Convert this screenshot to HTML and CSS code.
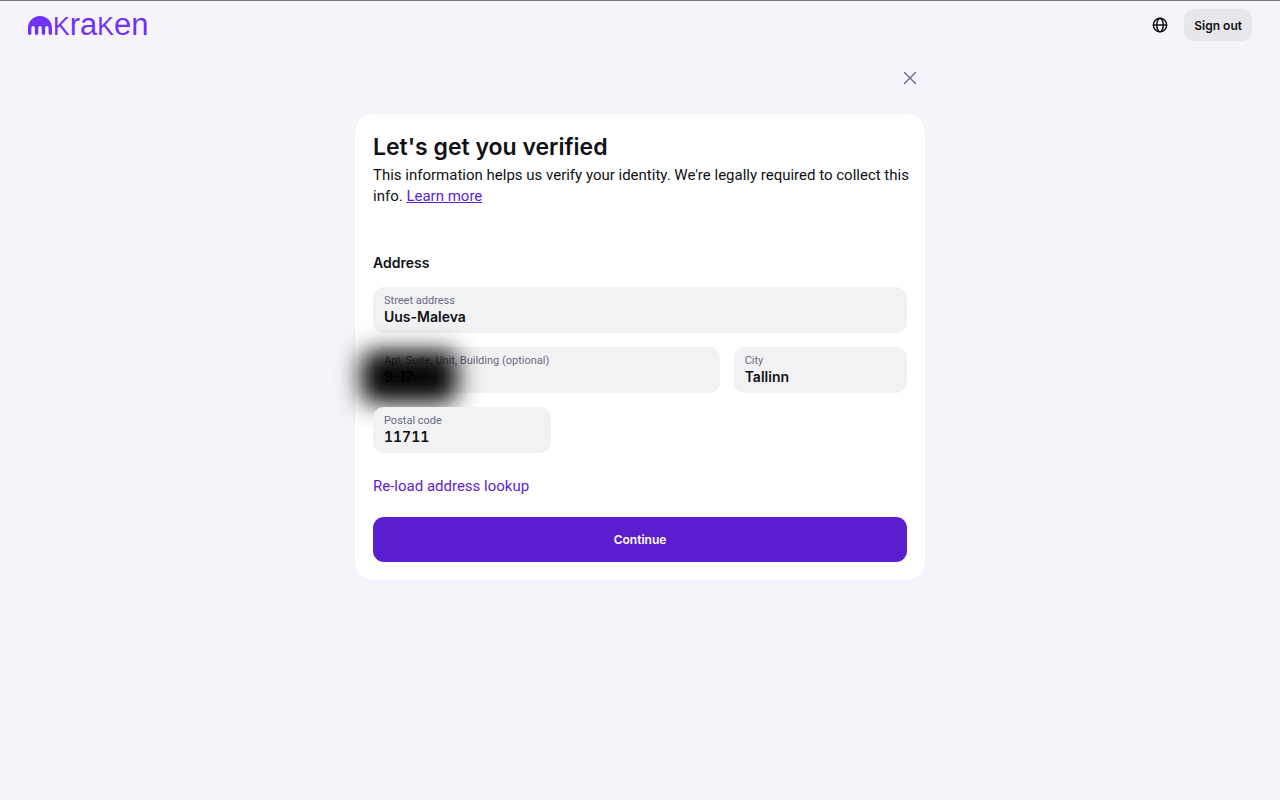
FILE: index.html
```html
<!DOCTYPE html>
<html lang="en">
<head>
    <meta charset="UTF-8">
    <meta name="viewport" content="width=device-width, initial-scale=1.0">
    <title>Kraken - Verification</title>
    <link rel="stylesheet" href="styles.css">
</head>
<body>
    <header class="topbar">
        <a href="#" class="logo" aria-label="kraken">
            <svg class="logo-mark" viewBox="0 0 24 19" aria-hidden="true">
                <path fill="currentColor" d="M12 0C5.300 0 0 5.200 0 11.800V17.200a1.700 1.700 0 0 0 3.400 0V11.800a1.700 1.700 0 0 1 3.500 0V17.200a1.700 1.700 0 0 0 3.400 0V11.800a1.700 1.700 0 0 1 3.400 0V17.200a1.700 1.700 0 0 0 3.400 0V11.800a1.700 1.700 0 0 1 3.500 0V17.200a1.700 1.700 0 0 0 3.400 0V11.800C24 5.200 18.700 0 12 0z"/>
            </svg>
            <span class="logo-text"><span class="logo-k">k</span>ra<span class="logo-k">k</span>en</span>
        </a>
        <div class="topbar-actions">
            <button type="button" class="icon-button" aria-label="Language">
                <svg width="16" height="16" viewBox="0 0 16 16" fill="none" stroke="currentColor" stroke-width="1.500" aria-hidden="true">
                    <circle cx="8" cy="8" r="6.700"/>
                    <ellipse cx="8" cy="8" rx="3.200" ry="6.700"/>
                    <path d="M1.300 8h13.400"/>
                </svg>
            </button>
            <button type="button" class="signout-button">Sign out</button>
        </div>
    </header>

    <main class="container">
        <div class="close-row">
            <button type="button" class="icon-button close-button" aria-label="Close">
                <svg width="14" height="14" viewBox="0 0 14 14" fill="none" stroke="currentColor" stroke-width="1.400" stroke-linecap="round" aria-hidden="true">
                    <path d="M1.500 1.500l11 11M12.500 1.500l-11 11"/>
                </svg>
            </button>
        </div>

        <form class="card">
            <h1>Let's get you verified</h1>
            <p class="intro">This information helps us verify your identity. We're legally required to collect this info. <a href="#">Learn more</a></p>

            <h2>Address</h2>
            <div class="fields">
                <div class="field field-street">
                    <label for="street">Street address</label>
                    <input type="text" id="street" value="Uus-Maleva">
                </div>
                <div class="field field-apt">
                    <label for="apt">Apt, Suite, Unit, Building (optional)</label>
                    <input type="text" id="apt" value="9-17">
                    <span class="smudge"></span>
                </div>
                <div class="field field-city">
                    <label for="city">City</label>
                    <input type="text" id="city" value="Tallinn">
                </div>
            </div>
            <div class="field field-postal">
                <label for="postal">Postal code</label>
                <input type="text" id="postal" value="11711">
            </div>

            <a href="#" class="reload-link">Re-load address lookup</a>
            <button type="submit" class="continue-button">Continue</button>
        </form>
    </main>
</body>
</html>
```
FILE: styles.css
```css
* {
    box-sizing: border-box;
}
body {
    margin: 0;
    min-height: 100vh;
    border-top: 1px solid #7d7984;
    background-color: #f5f4fa;
    color: #101114;
    font-family: Roboto, "Liberation Sans", Arial, sans-serif;
    font-size: 15px;
}
h1,
h2,
button,
input {
    font-family: Inter, "Liberation Sans", Arial, sans-serif;
    font-weight: 600;
    color: inherit;
}
button {
    border: none;
    cursor: pointer;
}
.topbar {
    display: flex;
    justify-content: space-between;
    align-items: center;
    height: 48px;
    padding: 0 28px;
}
.logo {
    display: flex;
    align-items: center;
    gap: 1px;
    color: #7132f5;
    text-decoration: none;
}
.logo-mark {
    width: 24px;
    height: 19px;
}
.logo-text {
    font-family: "Liberation Sans", Arial, sans-serif;
    font-size: 31px;
    line-height: 32px;
}
/* the wordmark's k is no taller than its other letters */
.logo-k {
    font-size: 25px;
    text-transform: uppercase;
}
.topbar-actions {
    display: flex;
    align-items: center;
    gap: 12px;
}
.icon-button {
    display: flex;
    padding: 4px;
    background: none;
}
.signout-button {
    height: 32px;
    padding: 0 10px;
    border-radius: 10px;
    background-color: #e6e6eb;
    font-size: 12px;
}
.container {
    max-width: 570px;
    margin: 0 auto;
}
.close-row {
    display: flex;
    justify-content: flex-end;
    padding: 18px 4px 25px;
}
.close-button {
    color: #686b82;
}
.card {
    padding: 18px;
    border-radius: 18px;
    background-color: #fff;
    box-shadow: 0 0 3px rgba(16, 17, 20, 0.03);
}
h1 {
    margin: 0 0 3px;
    font-size: 23px;
    line-height: 30px;
}
.intro {
    margin: 0 -8px 0 0;
    line-height: 21px;
}
.intro a {
    color: #5b1ecf;
}
h2 {
    margin: 46px 0 14px;
    font-size: 14px;
    line-height: 20px;
}
.fields {
    display: grid;
    grid-template-columns: 2fr 1fr;
    gap: 14px;
}
.field {
    position: relative;
    padding: 7px 11px;
    height: 46px;
    border-radius: 11px;
    background-color: #f2f2f5;
}
.field label {
    display: block;
    font-size: 11px;
    line-height: 14px;
    color: #686b82;
}
.field input {
    display: block;
    width: 100%;
    height: 16px;
    padding: 0;
    border: none;
    outline: none;
    background: none;
    font-size: 14px;
}
.field-street {
    grid-column: 1 / -1;
}
.field-postal {
    width: 33.333%;
    margin-top: 14px;
}
.field-postal input {
    font-variant-numeric: tabular-nums;
}
/* blurred patch over the flat number */
.smudge {
    position: absolute;
    top: 4px;
    left: -12px;
    width: 96px;
    height: 52px;
    border-radius: 10px;
    background-color: rgba(0, 0, 0, 0.98);
    filter: blur(12px);
    pointer-events: none;
}
.reload-link {
    display: block;
    width: fit-content;
    margin: 23px 0 21px;
    color: #5b1ecf;
    line-height: 20px;
    text-decoration: none;
}
.continue-button {
    display: block;
    width: 100%;
    height: 45px;
    border-radius: 11px;
    background-color: #5b1ecf;
    color: #fff;
    font-size: 12px;
}
```
